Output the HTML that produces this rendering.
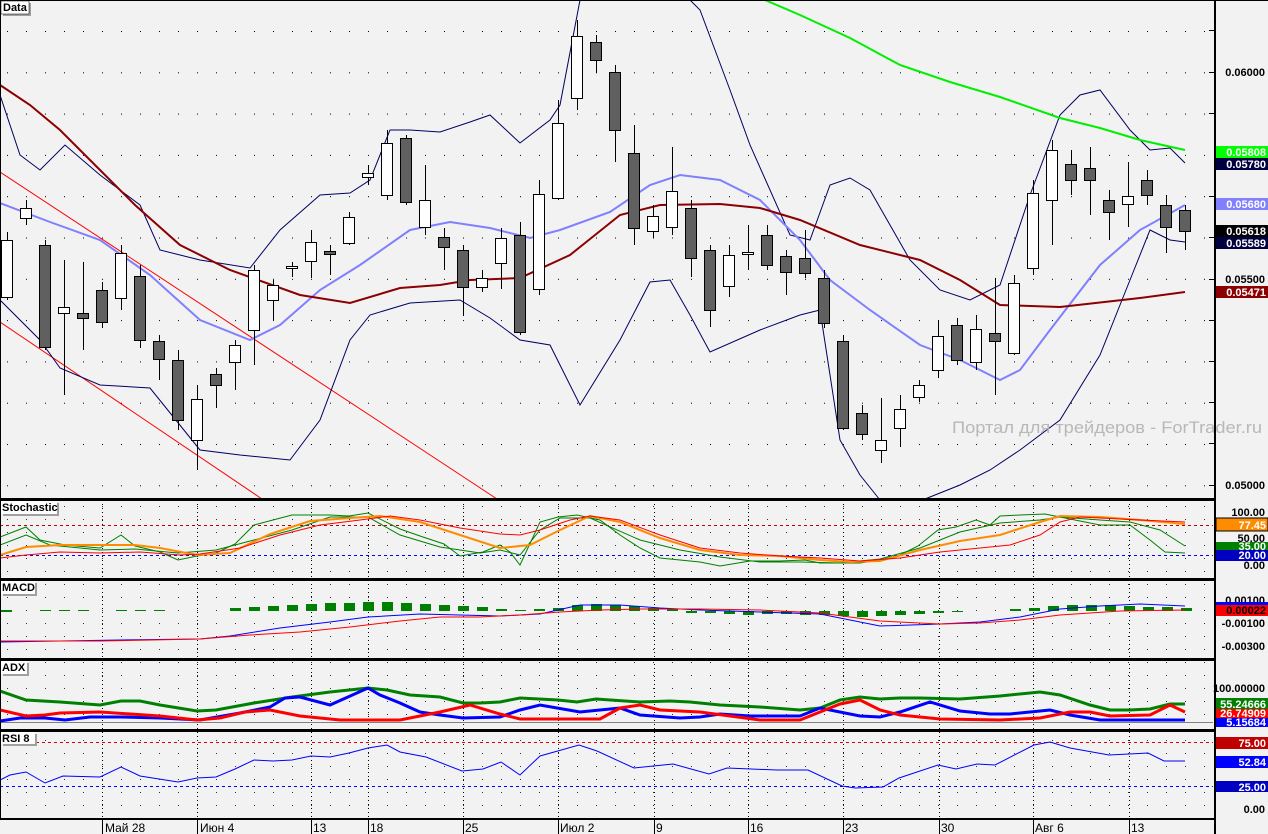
<!DOCTYPE html>
<html><head><meta charset="utf-8"><style>
html,body{margin:0;padding:0;background:#f2f2f2;}
svg{display:block;font-family:"Liberation Sans",sans-serif;}
.ax{font-size:11px;font-weight:bold;fill:#000;text-anchor:end}
.tag{font-size:11px;font-weight:bold;text-anchor:end}
.dt{font-size:12px;fill:#000}
.tt{font-size:11px;font-weight:bold;fill:#000}
</style></head><body>
<svg width="1268" height="834" viewBox="0 0 1268 834" xmlns="http://www.w3.org/2000/svg">
<rect width="1268" height="834" fill="#f2f2f2"/>
<defs>
<pattern id="dots" x="7" y="31" width="19" height="41.3" patternUnits="userSpaceOnUse"><rect x="0" y="0" width="1" height="1" fill="#000"/></pattern>
<pattern id="dots2" x="7" y="12" width="19" height="13" patternUnits="userSpaceOnUse"><rect x="0" y="0" width="1" height="1" fill="#000"/></pattern>
</defs>
<rect x="0" y="0" width="1213" height="497" fill="url(#dots)"/>
<rect x="0" y="501" width="1213" height="76" fill="url(#dots2)" opacity=".8"/>
<rect x="0" y="581" width="1213" height="76" fill="url(#dots2)" opacity=".8"/>
<rect x="0" y="661" width="1213" height="66" fill="url(#dots2)" opacity=".8"/>
<rect x="0" y="732" width="1213" height="86" fill="url(#dots2)" opacity=".8"/>
<g stroke="#000" stroke-width="1" stroke-dasharray="1,3">
<line x1="102.5" y1="500" x2="102.5" y2="819"/><line x1="197.5" y1="500" x2="197.5" y2="819"/>
<line x1="311.5" y1="500" x2="311.5" y2="819"/><line x1="368.5" y1="500" x2="368.5" y2="819"/>
<line x1="463.5" y1="500" x2="463.5" y2="819"/><line x1="558.5" y1="500" x2="558.5" y2="819"/>
<line x1="654.5" y1="500" x2="654.5" y2="819"/><line x1="748.5" y1="500" x2="748.5" y2="819"/>
<line x1="843.5" y1="500" x2="843.5" y2="819"/><line x1="939.5" y1="500" x2="939.5" y2="819"/>
<line x1="1033.5" y1="500" x2="1033.5" y2="819"/><line x1="1129.5" y1="500" x2="1129.5" y2="819"/>
</g>
<line x1="0" y1="172" x2="497" y2="499" stroke="#ff0000" stroke-width="1"/>
<line x1="0" y1="322" x2="262" y2="499" stroke="#ff0000" stroke-width="1"/>
<g fill="none" stroke="#000060" stroke-width="1">
<polyline points="0,95 20,155 40,170 65,145 100,175 140,205 160,250 200,260 250,268 280,230 320,195 350,193 370,180 390,130 410,130 440,132 470,122 490,115 520,143 550,120 560,105 580,0"/>
<polyline points="690,0 700,10 730,90 750,145 790,235 810,240 830,185 850,178 870,190 910,260 940,290 970,300 1000,285 1030,195 1060,115 1080,95 1100,90 1130,130 1150,150 1170,148 1185,163"/>
<polyline points="0,300 40,340 60,368 100,385 150,388 200,450 240,455 290,460 320,420 350,340 370,315 410,303 460,300 490,318 520,340 550,345 580,405 620,340 650,282 670,280 690,315 710,352 760,330 800,315 820,310 840,440 860,475 880,500"/>
<polyline points="925,499 960,485 990,470 1020,450 1060,420 1100,355 1130,280 1150,230 1170,240 1185,242"/>
</g>
<polyline fill="none" stroke="#8080ff" stroke-width="2" points="0,203 50,222 100,240 150,275 200,320 250,340 280,325 320,290 360,265 410,230 450,222 490,228 530,238 560,230 610,212 650,185 680,175 720,180 760,200 800,240 830,280 870,310 920,345 960,360 1000,380 1020,370 1050,330 1100,265 1140,230 1185,205"/>
<polyline fill="none" stroke="#8b0000" stroke-width="2" points="0,85 30,105 60,130 100,170 135,205 180,245 230,270 300,295 350,303 400,288 440,285 470,280 520,278 570,255 620,215 660,205 720,204 760,208 800,220 860,245 920,260 960,280 1000,305 1060,307 1140,298 1185,292"/>
<polyline fill="none" stroke="#00ee00" stroke-width="2" points="765,0 800,15 850,38 900,65 950,82 1000,97 1060,118 1100,128 1140,140 1185,150"/>
<g stroke="#000" stroke-width="1">
<line x1="7.5" y1="232" x2="7.5" y2="300"/><rect x="1.5" y="240.5" width="11" height="57" fill="#fff"/>
<line x1="26.5" y1="200" x2="26.5" y2="225"/><rect x="20.5" y="208.5" width="11" height="10" fill="#fff"/>
<line x1="45.5" y1="240" x2="45.5" y2="350"/><rect x="39.5" y="245.5" width="11" height="102" fill="#606060"/>
<line x1="64.5" y1="260" x2="64.5" y2="395"/><rect x="58.5" y="307.5" width="11" height="6" fill="#fff"/>
<line x1="83.5" y1="262" x2="83.5" y2="350"/><rect x="77.5" y="313.5" width="11" height="5" fill="#606060"/>
<line x1="102.5" y1="282" x2="102.5" y2="328"/><rect x="96.5" y="290.5" width="11" height="32" fill="#606060"/>
<line x1="121.5" y1="245" x2="121.5" y2="310"/><rect x="115.5" y="253.5" width="11" height="45" fill="#fff"/>
<line x1="140.5" y1="265" x2="140.5" y2="348"/><rect x="134.5" y="276.5" width="11" height="64" fill="#606060"/>
<line x1="159.5" y1="335" x2="159.5" y2="380"/><rect x="153.5" y="341.5" width="11" height="18" fill="#606060"/>
<line x1="178.5" y1="350" x2="178.5" y2="430"/><rect x="172.5" y="360.5" width="11" height="60" fill="#606060"/>
<line x1="197.5" y1="385" x2="197.5" y2="470"/><rect x="191.5" y="399.5" width="11" height="41" fill="#fff"/>
<line x1="216.5" y1="368" x2="216.5" y2="408"/><rect x="210.5" y="374.5" width="11" height="11" fill="#606060"/>
<line x1="235.5" y1="340" x2="235.5" y2="390"/><rect x="229.5" y="345.5" width="11" height="17" fill="#fff"/>
<line x1="254.5" y1="265" x2="254.5" y2="365"/><rect x="248.5" y="270.5" width="11" height="60" fill="#fff"/>
<line x1="273.5" y1="280" x2="273.5" y2="320"/><rect x="267.5" y="285.5" width="11" height="15" fill="#fff"/>
<line x1="292.5" y1="262" x2="292.5" y2="277"/><rect x="286.5" y="266.5" width="11" height="2" fill="#fff"/>
<line x1="311.5" y1="230" x2="311.5" y2="278"/><rect x="305.5" y="242.5" width="11" height="19" fill="#fff"/>
<line x1="330.5" y1="245" x2="330.5" y2="275"/><rect x="324.5" y="251.5" width="11" height="3" fill="#606060"/>
<line x1="349.5" y1="212" x2="349.5" y2="245"/><rect x="343.5" y="217.5" width="11" height="26" fill="#fff"/>
<line x1="368.5" y1="165" x2="368.5" y2="185"/><rect x="362.5" y="173.5" width="11" height="4" fill="#fff"/>
<line x1="387.5" y1="130" x2="387.5" y2="200"/><rect x="381.5" y="143.5" width="11" height="52" fill="#fff"/>
<line x1="406.5" y1="135" x2="406.5" y2="205"/><rect x="400.5" y="138.5" width="11" height="64" fill="#606060"/>
<line x1="425.5" y1="165" x2="425.5" y2="235"/><rect x="419.5" y="200.5" width="11" height="27" fill="#fff"/>
<line x1="444.5" y1="228" x2="444.5" y2="270"/><rect x="438.5" y="237.5" width="11" height="10" fill="#606060"/>
<line x1="463.5" y1="245" x2="463.5" y2="316"/><rect x="457.5" y="250.5" width="11" height="37" fill="#606060"/>
<line x1="482.5" y1="270" x2="482.5" y2="292"/><rect x="476.5" y="278.5" width="11" height="9" fill="#fff"/>
<line x1="501.5" y1="228" x2="501.5" y2="289"/><rect x="495.5" y="238.5" width="11" height="25" fill="#fff"/>
<line x1="520.5" y1="222" x2="520.5" y2="335"/><rect x="514.5" y="235.5" width="11" height="97" fill="#606060"/>
<line x1="539.5" y1="180" x2="539.5" y2="295"/><rect x="533.5" y="194.5" width="11" height="95" fill="#fff"/>
<line x1="558.5" y1="100" x2="558.5" y2="200"/><rect x="552.5" y="123.5" width="11" height="75" fill="#fff"/>
<line x1="577.5" y1="20" x2="577.5" y2="110"/><rect x="571.5" y="36.5" width="11" height="62" fill="#fff"/>
<line x1="596.5" y1="35" x2="596.5" y2="73"/><rect x="590.5" y="42.5" width="11" height="18" fill="#606060"/>
<line x1="615.5" y1="65" x2="615.5" y2="162"/><rect x="609.5" y="72.5" width="11" height="58" fill="#606060"/>
<line x1="634.5" y1="125" x2="634.5" y2="245"/><rect x="628.5" y="153.5" width="11" height="75" fill="#606060"/>
<line x1="653.5" y1="205" x2="653.5" y2="238"/><rect x="647.5" y="216.5" width="11" height="15" fill="#fff"/>
<line x1="672.5" y1="147" x2="672.5" y2="235"/><rect x="666.5" y="191.5" width="11" height="36" fill="#fff"/>
<line x1="691.5" y1="200" x2="691.5" y2="277"/><rect x="685.5" y="208.5" width="11" height="50" fill="#606060"/>
<line x1="710.5" y1="245" x2="710.5" y2="327"/><rect x="704.5" y="250.5" width="11" height="60" fill="#606060"/>
<line x1="729.5" y1="245" x2="729.5" y2="297"/><rect x="723.5" y="255.5" width="11" height="31" fill="#fff"/>
<line x1="748.5" y1="225" x2="748.5" y2="270"/><rect x="742.5" y="252.5" width="11" height="2" fill="#fff"/>
<line x1="767.5" y1="225" x2="767.5" y2="270"/><rect x="761.5" y="235.5" width="11" height="30" fill="#606060"/>
<line x1="786.5" y1="250" x2="786.5" y2="295"/><rect x="780.5" y="256.5" width="11" height="16" fill="#606060"/>
<line x1="805.5" y1="230" x2="805.5" y2="278"/><rect x="799.5" y="258.5" width="11" height="15" fill="#606060"/>
<line x1="824.5" y1="270" x2="824.5" y2="328"/><rect x="818.5" y="278.5" width="11" height="45" fill="#606060"/>
<line x1="843.5" y1="335" x2="843.5" y2="430"/><rect x="837.5" y="341.5" width="11" height="87" fill="#606060"/>
<line x1="862.5" y1="405" x2="862.5" y2="440"/><rect x="856.5" y="413.5" width="11" height="21" fill="#606060"/>
<line x1="881.5" y1="398" x2="881.5" y2="463"/><rect x="875.5" y="440.5" width="11" height="10" fill="#fff"/>
<line x1="900.5" y1="395" x2="900.5" y2="447"/><rect x="894.5" y="409.5" width="11" height="19" fill="#fff"/>
<line x1="919.5" y1="380" x2="919.5" y2="402"/><rect x="913.5" y="385.5" width="11" height="12" fill="#fff"/>
<line x1="938.5" y1="320" x2="938.5" y2="378"/><rect x="932.5" y="336.5" width="11" height="34" fill="#fff"/>
<line x1="957.5" y1="318" x2="957.5" y2="365"/><rect x="951.5" y="325.5" width="11" height="35" fill="#606060"/>
<line x1="976.5" y1="315" x2="976.5" y2="370"/><rect x="970.5" y="329.5" width="11" height="33" fill="#fff"/>
<line x1="995.5" y1="278" x2="995.5" y2="395"/><rect x="989.5" y="333.5" width="11" height="8" fill="#606060"/>
<line x1="1014.5" y1="275" x2="1014.5" y2="355"/><rect x="1008.5" y="283.5" width="11" height="70" fill="#fff"/>
<line x1="1033.5" y1="180" x2="1033.5" y2="275"/><rect x="1027.5" y="193.5" width="11" height="75" fill="#fff"/>
<line x1="1052.5" y1="140" x2="1052.5" y2="245"/><rect x="1046.5" y="150.5" width="11" height="50" fill="#fff"/>
<line x1="1071.5" y1="150" x2="1071.5" y2="195"/><rect x="1065.5" y="164.5" width="11" height="16" fill="#606060"/>
<line x1="1090.5" y1="147" x2="1090.5" y2="215"/><rect x="1084.5" y="168.5" width="11" height="12" fill="#606060"/>
<line x1="1109.5" y1="190" x2="1109.5" y2="240"/><rect x="1103.5" y="200.5" width="11" height="12" fill="#606060"/>
<line x1="1128.5" y1="162" x2="1128.5" y2="227"/><rect x="1122.5" y="196.5" width="11" height="8" fill="#fff"/>
<line x1="1147.5" y1="170" x2="1147.5" y2="205"/><rect x="1141.5" y="180.5" width="11" height="15" fill="#606060"/>
<line x1="1166.5" y1="195" x2="1166.5" y2="253"/><rect x="1160.5" y="205.5" width="11" height="22" fill="#606060"/>
<line x1="1185.5" y1="205" x2="1185.5" y2="250"/><rect x="1179.5" y="210.5" width="11" height="21" fill="#606060"/>
</g>
<text x="952" y="433" font-size="17" fill="#b8b8b8" textLength="310" lengthAdjust="spacingAndGlyphs">Портал для трейдеров - ForTrader.ru</text>

<line x1="0" y1="525.5" x2="1213" y2="525.5" stroke="#c00000" stroke-dasharray="3,3"/>
<line x1="0" y1="555.5" x2="1213" y2="555.5" stroke="#0000ff" stroke-dasharray="3,3"/>
<g fill="none">
<polyline stroke="#008000" stroke-width="1" points="0,537 26,527 40,540 65,545 100,548 121,535 135,546 160,552 178,560 197,556 216,553 235,544 254,525 273,520 292,515 330,515 349,516 368,513 400,529 420,536 444,544 460,556 483,552 500,545 510,552 520,565 540,522 558,517 577,515 600,520 620,535 640,548 660,558 700,562 720,566 750,561 780,561 805,560 820,563 860,563 880,560 900,555 918,546 938,530 956,527 976,520 990,525 1000,516 1020,515 1045,514 1075,520 1100,525 1130,525 1150,540 1165,552 1185,553"/>
<polyline stroke="#008000" stroke-width="1" points="0,545 26,535 50,545 100,550 135,549 178,553 216,550 254,540 292,530 330,517 368,517 400,535 440,547 480,553 500,550 520,555 540,530 560,518 590,518 640,540 680,550 720,557 760,562 800,562 840,563 880,559 920,548 960,532 1000,523 1040,520 1060,517 1100,520 1130,522 1160,530 1185,546"/>
<polyline stroke="#ff8c00" stroke-width="2" points="0,555 26,547 60,545 100,545 135,545 160,548 197,555 230,553 270,534 310,521 350,518 380,516 420,522 460,535 500,548 530,545 560,530 590,516 620,522 660,538 700,550 740,555 780,556 820,560 850,562 880,561 920,550 960,541 1000,535 1040,522 1060,516 1100,517 1140,520 1185,524"/>
<polyline stroke="#ff0000" stroke-width="1" points="0,558 26,555 60,552 100,553 140,552 180,555 200,554 240,548 280,535 320,525 360,520 390,516 420,520 460,528 500,534 520,535 540,530 570,520 590,516 620,520 660,535 700,548 740,553 780,556 820,558 860,561 900,558 940,552 980,548 1010,545 1040,535 1060,522 1080,517 1100,518 1140,520 1185,522"/>
</g>
<g fill="#008000">
<rect x="1" y="610" width="11" height="2"/><rect x="40" y="610" width="11" height="1"/><rect x="59" y="610" width="11" height="1"/><rect x="78" y="610" width="11" height="1"/>
<rect x="116" y="610" width="11" height="1"/><rect x="135" y="610" width="11" height="1"/><rect x="154" y="610" width="11" height="1"/>
<rect x="230" y="608" width="11" height="3"/><rect x="249" y="607" width="11" height="4"/><rect x="268" y="606" width="11" height="5"/><rect x="287" y="605" width="11" height="6"/><rect x="306" y="604" width="11" height="7"/><rect x="325" y="603" width="11" height="8"/><rect x="344" y="603" width="11" height="8"/><rect x="363" y="602" width="11" height="9"/><rect x="382" y="602" width="11" height="9"/><rect x="401" y="603" width="11" height="8"/><rect x="420" y="604" width="11" height="7"/><rect x="439" y="605" width="11" height="6"/><rect x="458" y="606" width="11" height="5"/><rect x="477" y="607" width="11" height="4"/><rect x="496" y="609" width="11" height="2"/><rect x="515" y="610" width="11" height="1"/><rect x="534" y="609" width="11" height="2"/><rect x="553" y="608" width="11" height="3"/><rect x="572" y="605" width="11" height="6"/><rect x="591" y="604" width="11" height="7"/><rect x="610" y="605" width="11" height="6"/><rect x="629" y="606" width="11" height="5"/><rect x="648" y="608" width="11" height="3"/><rect x="667" y="609" width="11" height="2"/>
<rect x="686" y="611" width="11" height="2"/><rect x="705" y="611" width="11" height="2"/><rect x="724" y="611" width="11" height="3"/><rect x="743" y="611" width="11" height="4"/><rect x="762" y="611" width="11" height="3"/><rect x="781" y="611" width="11" height="3"/><rect x="800" y="611" width="11" height="4"/><rect x="819" y="611" width="11" height="4"/><rect x="838" y="611" width="11" height="5"/><rect x="857" y="611" width="11" height="6"/><rect x="876" y="611" width="11" height="5"/><rect x="895" y="611" width="11" height="4"/><rect x="914" y="611" width="11" height="3"/><rect x="933" y="611" width="11" height="2"/><rect x="952" y="611" width="11" height="1"/>
<rect x="1010" y="609" width="11" height="2"/><rect x="1029" y="608" width="11" height="3"/><rect x="1048" y="606" width="11" height="5"/><rect x="1067" y="605" width="11" height="6"/><rect x="1086" y="605" width="11" height="6"/><rect x="1105" y="605" width="11" height="6"/><rect x="1124" y="606" width="11" height="5"/><rect x="1143" y="607" width="11" height="4"/><rect x="1162" y="607" width="11" height="4"/><rect x="1181" y="608" width="11" height="3"/>
</g>
<polyline fill="none" stroke="#0000ff" stroke-width="1" points="0,642 60,641 120,640 200,639 230,636 280,628 330,622 368,617 420,614 460,615 500,616 540,614 580,605 620,605 660,608 700,610 760,612 820,614 880,626 940,624 980,622 1020,617 1060,609 1100,606 1140,604 1185,606"/>
<polyline fill="none" stroke="#ff0000" stroke-width="1" points="0,641 100,641 200,639 250,635 300,632 350,627 400,621 440,617 480,617 520,615 560,612 600,610 640,609 700,609 760,610 820,613 880,621 940,624 980,623 1020,620 1060,615 1120,611 1185,610"/>
<line x1="0" y1="722.5" x2="1213" y2="722.5" stroke="#808080"/>
<polyline fill="none" stroke="#008000" stroke-width="3" points="0,691 26,700 60,702 100,705 121,701 140,701 160,705 197,711 216,710 254,703 292,697 330,692 368,688 387,690 410,695 440,697 463,703 480,703 500,702 520,698 558,700 577,702 596,699 640,702 670,701 690,702 720,705 760,707 800,710 820,708 840,700 860,697 880,699 900,698 920,698 960,699 1000,696 1040,692 1060,695 1090,705 1110,710 1130,710 1150,709 1170,704 1185,704"/>
<polyline fill="none" stroke="#0000ff" stroke-width="3" points="0,721 20,718 45,718 65,720 90,717 121,717 160,718 200,720 240,713 270,707 285,698 300,697 330,705 368,688 380,695 400,703 420,712 440,715 463,718 500,717 520,710 540,705 580,712 600,710 620,708 640,715 680,718 700,717 720,714 750,716 780,716 800,716 820,708 860,716 880,717 900,712 930,702 960,711 990,714 1010,714 1030,712 1050,710 1070,715 1100,720 1130,720 1185,720"/>
<polyline fill="none" stroke="#ff0000" stroke-width="3" points="0,710 26,716 45,715 60,713 100,712 160,716 197,720 220,718 245,712 270,710 300,716 340,720 400,720 440,712 470,705 500,714 520,719 560,719 600,719 620,708 640,705 660,710 700,712 760,720 800,720 840,704 860,700 880,710 900,715 940,719 1000,720 1040,718 1070,712 1090,712 1110,716 1150,715 1170,705 1185,712"/>
<line x1="0" y1="742.5" x2="1213" y2="742.5" stroke="#e00000" stroke-dasharray="3,3"/>
<line x1="0" y1="786.5" x2="1213" y2="786.5" stroke="#0000ff" stroke-dasharray="3,3"/>
<polyline fill="none" stroke="#0000ff" stroke-width="1" points="0,780 10,775 26,772 45,783 63,776 100,777 121,767 140,776 178,782 197,778 216,777 235,769 254,760 273,761 292,760 311,756 330,757 349,753 368,748 387,745 400,752 426,757 462,771 483,769 501,762 520,775 540,756 579,745 597,751 634,768 673,764 709,774 727,768 777,770 808,770 842,786 855,788 883,787 899,778 938,765 956,769 977,764 995,765 1034,745 1050,742 1070,748 1109,755 1148,753 1164,761 1185,761"/>
<g fill="#000">
<rect x="0" y="0" width="1268" height="1"/>
<rect x="0" y="498" width="1216" height="3"/>
<rect x="0" y="578" width="1216" height="3"/>
<rect x="0" y="658" width="1216" height="3"/>
<rect x="0" y="729" width="1216" height="3"/>
<rect x="0" y="818" width="1216" height="2"/>
<rect x="0" y="0" width="1" height="820"/>
<rect x="1214" y="0" width="2" height="834"/>
</g>
<g stroke="#000"><line x1="102.5" y1="820" x2="102.5" y2="834"/><line x1="197.5" y1="820" x2="197.5" y2="834"/><line x1="311.5" y1="820" x2="311.5" y2="834"/><line x1="368.5" y1="820" x2="368.5" y2="834"/><line x1="463.5" y1="820" x2="463.5" y2="834"/><line x1="558.5" y1="820" x2="558.5" y2="834"/><line x1="654.5" y1="820" x2="654.5" y2="834"/><line x1="748.5" y1="820" x2="748.5" y2="834"/><line x1="843.5" y1="820" x2="843.5" y2="834"/><line x1="939.5" y1="820" x2="939.5" y2="834"/><line x1="1033.5" y1="820" x2="1033.5" y2="834"/><line x1="1129.5" y1="820" x2="1129.5" y2="834"/></g>
<g class="dt"><text x="105" y="832">Май 28</text><text x="200" y="832">Июн 4</text><text x="313" y="832">13</text><text x="370" y="832">18</text><text x="465" y="832">25</text><text x="560" y="832">Июл 2</text><text x="656" y="832">9</text><text x="750" y="832">16</text><text x="845" y="832">23</text><text x="941" y="832">30</text><text x="1035" y="832">Авг 6</text><text x="1131" y="832">13</text></g>
<g stroke="#000"><line x1="1209" y1="72.5" x2="1214" y2="72.5"/><line x1="1209" y1="279.5" x2="1214" y2="279.5"/><line x1="1209" y1="485.5" x2="1214" y2="485.5"/><line x1="1209" y1="30.5" x2="1214" y2="30.5"/><line x1="1209" y1="113.5" x2="1214" y2="113.5"/><line x1="1209" y1="196.5" x2="1214" y2="196.5"/><line x1="1209" y1="237.5" x2="1214" y2="237.5"/><line x1="1209" y1="320.5" x2="1214" y2="320.5"/><line x1="1209" y1="361.5" x2="1214" y2="361.5"/><line x1="1209" y1="402.5" x2="1214" y2="402.5"/><line x1="1209" y1="443.5" x2="1214" y2="443.5"/></g>
<g class="ax">
<text x="1265" y="76">0.06000</text><text x="1265" y="283">0.05500</text><text x="1265" y="489">0.05000</text>
<text x="1265" y="516">100.00</text><text x="1265" y="542">50.00</text><text x="1265" y="569">0.00</text>
<text x="1265" y="604">0.00100</text><text x="1265" y="627">-0.00100</text><text x="1265" y="650">-0.00300</text>
<text x="1265" y="692">100.00000</text><text x="1265" y="813">0.00</text>
</g>
<rect x="1216" y="146" width="52" height="12" fill="#00ff00"/><text class="tag" x="1266" y="156" fill="#fff">0.05808</text>
<rect x="1216" y="158" width="52" height="12" fill="#000040"/><text class="tag" x="1266" y="168" fill="#fff">0.05780</text>
<rect x="1216" y="198" width="52" height="12" fill="#8080ff"/><text class="tag" x="1266" y="208" fill="#fff">0.05680</text>
<rect x="1216" y="225" width="52" height="12" fill="#000"/><text class="tag" x="1266" y="235" fill="#fff">0.05618</text>
<rect x="1216" y="237" width="52" height="12" fill="#000040"/><text class="tag" x="1266" y="247" fill="#fff">0.05589</text>
<rect x="1216" y="286" width="52" height="12" fill="#8b0000"/><text class="tag" x="1266" y="296" fill="#fff">0.05471</text>
<rect x="1216" y="518" width="52" height="13" fill="#ff8c00" stroke="#000"/><text class="tag" x="1266" y="529" fill="#fff">77.45</text>
<rect x="1216" y="542" width="52" height="8" fill="#008000"/><text class="tag" x="1266" y="550" fill="#fff">35.00</text>
<rect x="1216" y="550" width="52" height="11" fill="#0000c0"/><text class="tag" x="1266" y="559" fill="#fff">20.00</text>
<rect x="1216" y="602" width="52" height="3" fill="#0000ff"/>
<rect x="1216" y="605" width="52" height="11" fill="#ff0000"/><text class="tag" x="1266" y="614" fill="#000">0.00022</text>
<rect x="1216" y="698" width="52" height="11" fill="#008000"/><text class="tag" x="1266" y="708" fill="#fff">55.24666</text>
<rect x="1216" y="709" width="52" height="9" fill="#ff0000"/><text class="tag" x="1266" y="717" fill="#fff">26.74909</text>
<rect x="1216" y="718" width="52" height="9" fill="#0000ff"/><text class="tag" x="1266" y="726" fill="#fff">5.15684</text>
<rect x="1216" y="737" width="52" height="12" fill="#c00000"/><text class="tag" x="1266" y="747" fill="#fff">75.00</text>
<rect x="1216" y="756" width="52" height="12" fill="#0000ff"/><text class="tag" x="1266" y="766" fill="#fff">52.84</text>
<rect x="1216" y="781" width="52" height="11" fill="#0000c0"/><text class="tag" x="1266" y="791" fill="#fff">25.00</text>
<g>
<rect x="3" y="3" width="28" height="13" fill="#a0a0a0"/><rect x="1" y="1" width="28" height="13" fill="#fff" stroke="#000" stroke-width=".5"/><text class="tt" x="3" y="11">Data</text>
<rect x="3" y="503" width="56" height="13" fill="#a0a0a0"/><rect x="1" y="501" width="56" height="13" fill="#fff"/><text class="tt" x="2" y="511">Stochastic</text>
<rect x="3" y="583" width="34" height="13" fill="#a0a0a0"/><rect x="1" y="581" width="34" height="13" fill="#fff"/><text class="tt" x="2" y="591">MACD</text>
<rect x="3" y="663" width="26" height="13" fill="#a0a0a0"/><rect x="1" y="661" width="26" height="13" fill="#fff"/><text class="tt" x="2" y="671">ADX</text>
<rect x="3" y="734" width="34" height="12" fill="#a0a0a0"/><rect x="1" y="732" width="34" height="12" fill="#fff"/><text class="tt" x="2" y="742">RSI 8</text>
</g>
</svg>
</body></html>
